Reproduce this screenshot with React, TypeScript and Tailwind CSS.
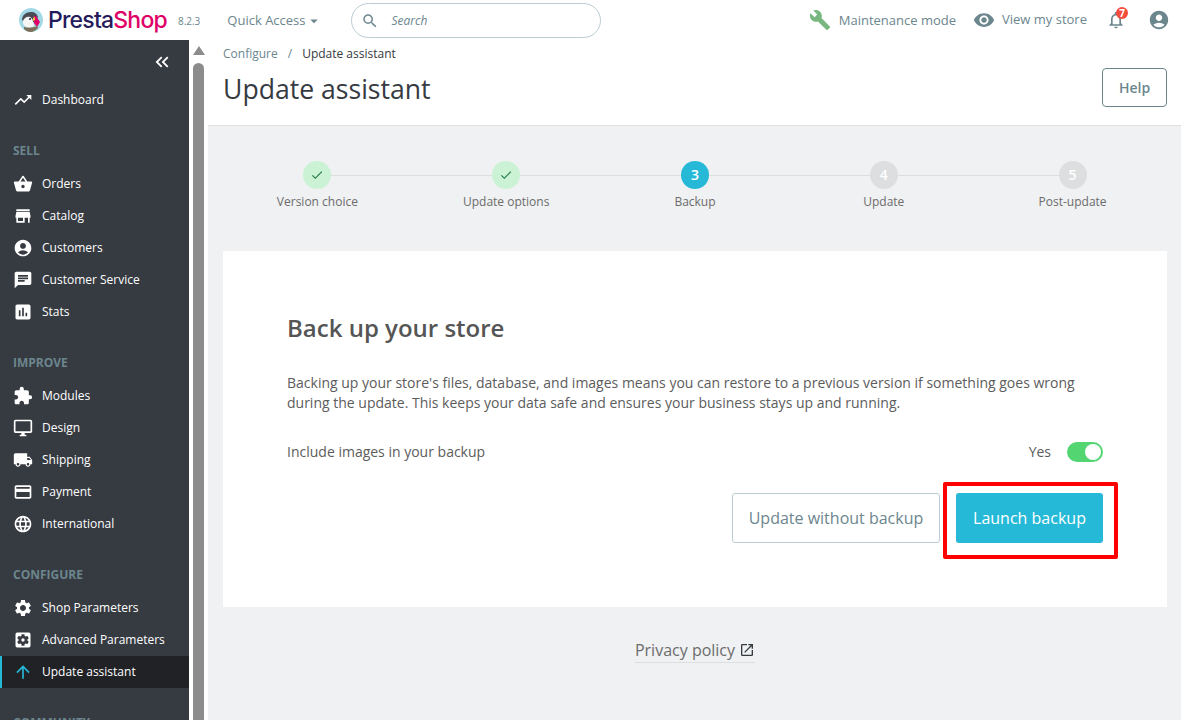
import type { ReactNode } from 'react';
import {
  MdAccountCircle,
  MdArrowDropDown,
  MdArrowUpward,
  MdAssessment,
  MdBuild,
  MdChat,
  MdCheck,
  MdCreditCard,
  MdExtension,
  MdKeyboardDoubleArrowLeft,
  MdLanguage,
  MdLocalShipping,
  MdNotificationsNone,
  MdOpenInNew,
  MdOutlineDesktopWindows,
  MdRemoveRedEye,
  MdSearch,
  MdSettings,
  MdSettingsApplications,
  MdShoppingBasket,
  MdStore,
  MdTrendingUp,
} from 'react-icons/md';

type NavItem = { label: string; icon: ReactNode; active?: boolean };

const ICON = 'text-[20px] text-white';

const SECTIONS: { title: string; items: NavItem[] }[] = [
  {
    title: 'SELL',
    items: [
      { label: 'Orders', icon: <MdShoppingBasket className={ICON} /> },
      { label: 'Catalog', icon: <MdStore className={ICON} /> },
      { label: 'Customers', icon: <MdAccountCircle className={ICON} /> },
      { label: 'Customer Service', icon: <MdChat className={ICON} /> },
      { label: 'Stats', icon: <MdAssessment className={ICON} /> },
    ],
  },
  {
    title: 'IMPROVE',
    items: [
      { label: 'Modules', icon: <MdExtension className={ICON} /> },
      { label: 'Design', icon: <MdOutlineDesktopWindows className={ICON} /> },
      { label: 'Shipping', icon: <MdLocalShipping className={ICON} /> },
      { label: 'Payment', icon: <MdCreditCard className={ICON} /> },
      { label: 'International', icon: <MdLanguage className={ICON} /> },
    ],
  },
  {
    title: 'CONFIGURE',
    items: [
      { label: 'Shop Parameters', icon: <MdSettings className={ICON} /> },
      { label: 'Advanced Parameters', icon: <MdSettingsApplications className={ICON} /> },
      { label: 'Update assistant', icon: <MdArrowUpward className="text-[20px] text-[#25b9d7]" />, active: true },
    ],
  },
  // only the top of this title shows above the fold
  { title: 'COMMUNITY', items: [] },
];

const STEPS = [
  { label: 'Version choice', state: 'done', n: 1 },
  { label: 'Update options', state: 'done', n: 2 },
  { label: 'Backup', state: 'current', n: 3 },
  { label: 'Update', state: 'todo', n: 4 },
  { label: 'Post-update', state: 'todo', n: 5 },
];

function Logo() {
  return (
    <svg width="26" height="24" viewBox="0 0 26 24" className="shrink-0">
      <circle cx="12" cy="12" r="12" fill="#a3d9e6" />
      <path d="M3 12c0-5 4-8 9-8 4 0 6 2 7 5l-3 5H5z" fill="#4a4d55" />
      <path d="M4 13c1-3 4-5 7-4 2 1 3 3 3 5l1 4c-2 2-7 2-9 0-2-1-2-3-2-5z" fill="#f7f6f2" />
      <path d="M15 8l2 0 4 6-3 5-3-4z" fill="#df0067" />
      <path d="M14 10l2-1 0 3-2 1z" fill="#f5c542" />
      <circle cx="11" cy="11" r="1" fill="#251b5b" />
      <path d="M5 19c3 1 9 1 13-1l1 2c-2 2-5 4-7 4-3 0-5-1-7-3z" fill="#7d6f58" />
    </svg>
  );
}

function SidebarRow({ item }: { item: NavItem }) {
  return (
    <div className={`flex h-8 items-center ${item.active ? 'border-l-2 border-[#25b9d7] bg-[#202226] pl-[11px]' : 'pl-[13px]'}`}>
      <span className="flex w-[29px] items-center">{item.icon}</span>
      <span className="text-xs text-white">{item.label}</span>
    </div>
  );
}

function Sidebar() {
  return (
    <aside className="w-[189px] shrink-0 overflow-hidden bg-[#363a41]">
      <div className="flex h-[44px] items-center justify-end pr-[16px]">
        <MdKeyboardDoubleArrowLeft className="text-[22px] text-white" />
      </div>
      <SidebarRow item={{ label: 'Dashboard', icon: <MdTrendingUp className={ICON} /> }} />
      {SECTIONS.map((section) => (
        <div key={section.title}>
          <div className="flex h-[52px] items-start pl-[13px] pt-[27px] text-xs font-bold leading-4 text-[#6c868e]">
            {section.title}
          </div>
          {section.items.map((item) => (
            <SidebarRow key={item.label} item={item} />
          ))}
        </div>
      ))}
    </aside>
  );
}

function Stepper() {
  return (
    <div className="relative grid grid-cols-5">
      <div className="absolute left-[94px] right-[94px] top-[14px] h-[1px] bg-[#dcdee0]" />
      {STEPS.map((step) => (
        <div key={step.label} className="relative flex flex-col items-center">
          {step.state === 'done' && (
            <span className="flex h-7 w-7 items-center justify-center rounded-full bg-[#cbf2d4]">
              <MdCheck className="text-[14px] text-[#1f7a45]" />
            </span>
          )}
          {step.state === 'current' && (
            <span className="flex h-7 w-7 items-center justify-center rounded-full bg-[#25b9d7] text-sm font-semibold text-white">
              {step.n}
            </span>
          )}
          {step.state === 'todo' && (
            <span className="flex h-7 w-7 items-center justify-center rounded-full bg-[#dddedf] text-sm font-semibold text-white">
              {step.n}
            </span>
          )}
          <span className="mt-[5px] text-xs leading-4 text-[#6c6c6c]">{step.label}</span>
        </div>
      ))}
    </div>
  );
}

export default function App() {
  return (
    <div className="flex h-screen flex-col overflow-hidden bg-white font-['Open_Sans',sans-serif] text-[#363a41]">
      <header className="flex h-10 shrink-0 items-center bg-white pl-[19px] pr-[11px]">
        <Logo />
        <span className="ml-[3px] font-['Inter',sans-serif] text-[23px] font-medium leading-none tracking-[-0.8px] text-[#251b5b]">
          Presta<span className="text-[#df0067]">Shop</span>
        </span>
        <span className="ml-[11px] mt-[3px] text-[10px] text-[#6c868e]">8.2.3</span>
        <div className="ml-[27px] mt-[1px] flex items-center text-[13px] text-[#6c868e]">
          Quick Access
          <MdArrowDropDown className="-ml-[1px] text-[18px]" />
        </div>
        <div className="ml-[28px] mt-[1px] flex h-[35px] w-[250px] items-center rounded-full border border-[#bbcdd2] pl-[9px]">
          <MdSearch className="text-[18px] text-[#6c868e]" />
          <span className="ml-[13px] text-xs italic text-[#6c868e]">Search</span>
        </div>
        <div className="ml-auto flex items-center">
          <MdBuild className="text-[22px] text-[#78b77f]" />
          <span className="ml-[8px] mt-[1px] text-[13px] text-[#6c868e]">Maintenance mode</span>
          <MdRemoveRedEye className="ml-[17px] text-[22px] text-[#6c868e]" />
          <span className="ml-[7px] text-[13px] text-[#6c868e]">View my store</span>
          <div className="relative ml-[19px]">
            <MdNotificationsNone className="text-[20px] text-[#6c868e]" />
            <span className="absolute -right-[2px] -top-[3px] flex h-3 w-3 items-center justify-center rounded-full bg-[#f54c3e] text-[10px] font-bold leading-none text-white">
              7
            </span>
          </div>
          <MdAccountCircle className="ml-[22px] text-[22px] text-[#6c868e]" />
        </div>
      </header>

      <div className="flex min-h-0 flex-1">
        <Sidebar />
        <div className="w-[19px] shrink-0 bg-white px-[4px] pt-[6px]">
          <div className="h-0 w-0 border-x-[6px] border-b-[9px] border-x-transparent border-b-[#8c8c8c]" />
          <div className="mt-[8px] h-full w-[11px] rounded-t-full bg-[#8c8c8c]" />
        </div>

        <main className="min-w-0 flex-1 overflow-hidden bg-[#eff1f2]">
          <div className="flex h-[86px] justify-between border-b border-[#dfdfdf] bg-white pl-[15px] pr-[14px]">
            <div>
              <div className="flex h-[28px] items-center text-xs">
                <span className="text-[#6c868e]">Configure</span>
                <span className="mx-[10px] text-[#6c868e]">/</span>
                <span className="text-[#363a41]">Update assistant</span>
              </div>
              <h1 className="text-[26.6px] font-normal leading-[42px] text-[#363a41]">Update assistant</h1>
            </div>
            <button className="mt-[28px] h-[39px] w-[65px] rounded border border-[#6c868e] text-sm font-semibold text-[#6c868e]">
              Help
            </button>
          </div>

          <div className="px-[15px] pr-[14px] pt-[35px]">
            <Stepper />

            <section className="relative mt-[41px] h-[356px] bg-white px-[64px] pt-[59px]">
              <h2 className="text-[24px] font-semibold leading-9 text-[#555]">Back up your store</h2>
              <p className="mt-[27px] text-sm leading-5 text-[#5c5c5c]">
                Backing up your store's files, database, and images means you can restore to a previous version if something goes wrong
                during the update. This keeps your data safe and ensures your business stays up and running.
              </p>
              <div className="mt-[27px] flex h-[24px] items-center justify-between">
                <span className="text-sm text-[#5c5c5c]">Include images in your backup</span>
                <div className="flex items-center">
                  <span className="mr-[16px] text-sm text-[#5c5c5c]">Yes</span>
                  <span className="flex h-5 w-9 items-center justify-end rounded-full bg-[#53d572] pr-[2px]">
                    <span className="h-4 w-4 rounded-full bg-white" />
                  </span>
                </div>
              </div>
              <div className="mt-[29px] flex justify-end gap-4">
                <button className="h-[50px] w-[208px] rounded-[3px] border border-[#bbcdd2] bg-white text-base text-[#6c868e]">
                  Update without backup
                </button>
                <button className="h-[50px] w-[147px] rounded-[3px] bg-[#25b9d7] text-base text-white">Launch backup</button>
              </div>
              <div className="absolute right-[49px] top-[231px] h-[77px] w-[175px] rounded-[2px] border-4 border-[#ff0000]" />
            </section>

            <div className="mt-[31px] flex justify-center">
              <span className="flex items-center gap-[4px] border-b border-[#dcdee0] text-base leading-6 text-[#6c6c6c]">
                Privacy policy
                <MdOpenInNew className="text-[16px] text-[#363a41]" />
              </span>
            </div>
          </div>
        </main>
      </div>
    </div>
  );
}
